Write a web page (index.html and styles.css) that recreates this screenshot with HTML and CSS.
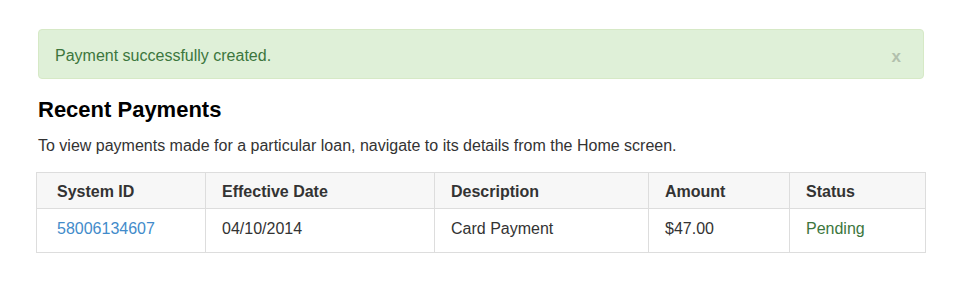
FILE: index.html
```html
<!DOCTYPE html>
<html>
<head>
<meta charset="utf-8">
<link rel="stylesheet" href="styles.css">
</head>
<body>
<div class="page">
  <div class="alert">
    <span class="alert-text">Payment successfully created.</span>
    <span class="close">x</span>
  </div>
  <h3 class="title">Recent Payments</h3>
  <p class="intro">To view payments made for a particular loan, navigate to its details from the Home screen.</p>
  <table class="payments">
    <colgroup>
      <col class="c1"><col class="c2"><col class="c3"><col class="c4"><col class="c5">
    </colgroup>
    <thead>
      <tr><th>System ID</th><th>Effective Date</th><th>Description</th><th>Amount</th><th>Status</th></tr>
    </thead>
    <tbody>
      <tr><td><a class="link" href="#">58006134607</a></td><td>04/10/2014</td><td>Card Payment</td><td>$47.00</td><td class="pending">Pending</td></tr>
    </tbody>
  </table>
</div>
</body>
</html>
```
FILE: styles.css
```css
html, body {
  margin: 0;
  padding: 0;
  background: #fff;
}
body {
  font-family: "Liberation Sans", Arial, Helvetica, sans-serif;
  font-size: 16px;
  line-height: 20px;
  color: #333;
}
.page {
  width: 886px;
  padding: 29px 0 0 38px;
}
.alert {
  display: flex;
  justify-content: space-between;
  align-items: center;
  height: 20px;
  background: #dff0d8;
  border: 1px solid #d6e9c6;
  border-radius: 4px;
  color: #3c763d;
  padding: 16px 22px 12px 16px;
}
.close {
  font-size: 17px;
  font-weight: bold;
  color: #b2c0ad;
  line-height: 16px;
  margin-top: 1px;
}
.title {
  margin: 18px 0 0;
  font-size: 22px;
  line-height: 26px;
  font-weight: bold;
  color: #000;
}
.intro {
  margin: 13px 0 0;
  font-size: 16px;
  line-height: 20px;
}
.payments {
  margin: 16px -2px 0;
  width: 889px;
  border-collapse: collapse;
  table-layout: fixed;
}
.c1 { width: 169px; }
.c2 { width: 229px; }
.c3 { width: 214px; }
.c4 { width: 141px; }
.c5 { width: 136px; }
.payments th, .payments td {
  border: 1px solid #ddd;
  text-align: left;
  padding: 10px 16px 13px;
  line-height: 20px;
}
.payments th {
  background: #f7f7f7;
  font-weight: bold;
  padding: 9px 16px 6px;
}
.payments th:first-child, .payments td:first-child {
  padding-left: 20px;
}
.link {
  color: #428bca;
  text-decoration: none;
}
.pending {
  color: #3c763d;
}
```
